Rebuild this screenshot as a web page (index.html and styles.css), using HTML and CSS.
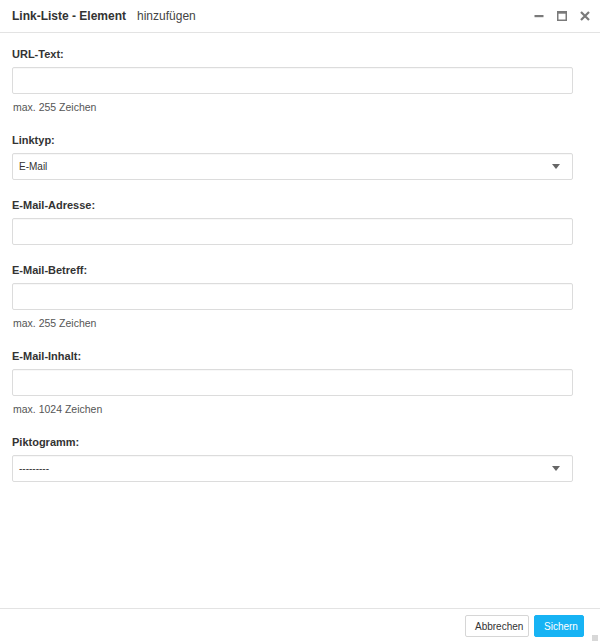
FILE: index.html
```html
<!DOCTYPE html>
<html lang="de">
<head>
<meta charset="utf-8">
<title>Link-Liste - Element hinzufügen</title>
<link rel="stylesheet" href="styles.css">
</head>
<body>
<div class="dialog">
  <header class="dlg-head">
    <h1 class="dlg-title"><span class="t-strong">Link-Liste - Element</span><span class="t-light">hinzufügen</span></h1>
    <div class="win-ctrls">
      <svg class="ico" width="10" height="10" viewBox="0 0 10 10"><rect x="0.5" y="4" width="9" height="2.2" fill="#7a7a7a"/></svg>
      <svg class="ico" width="10" height="10" viewBox="0 0 10 10"><rect x="0.75" y="0.75" width="8.5" height="8.5" fill="none" stroke="#7a7a7a" stroke-width="1.5"/><rect x="0.5" y="0.5" width="9" height="2.2" fill="#7a7a7a"/></svg>
      <svg class="ico" width="10" height="10" viewBox="0 0 10 10"><path d="M1 1 L9 9 M9 1 L1 9" stroke="#7a7a7a" stroke-width="2.2" stroke-linecap="butt"/></svg>
    </div>
  </header>
  <main class="dlg-body">
    <div class="group">
      <label class="lbl">URL-Text:</label>
      <div class="field"></div>
      <div class="hint">max. 255 Zeichen</div>
    </div>
    <div class="group">
      <label class="lbl">Linktyp:</label>
      <div class="field select"><span class="val">E-Mail</span><span class="caret"></span></div>
    </div>
    <div class="group">
      <label class="lbl">E-Mail-Adresse:</label>
      <div class="field"></div>
    </div>
    <div class="group">
      <label class="lbl">E-Mail-Betreff:</label>
      <div class="field"></div>
      <div class="hint">max. 255 Zeichen</div>
    </div>
    <div class="group">
      <label class="lbl">E-Mail-Inhalt:</label>
      <div class="field"></div>
      <div class="hint">max. 1024 Zeichen</div>
    </div>
    <div class="group">
      <label class="lbl">Piktogramm:</label>
      <div class="field select"><span class="val">---------</span><span class="caret"></span></div>
    </div>
  </main>
  <footer class="dlg-foot">
    <button class="btn btn-default">Abbrechen</button>
    <button class="btn btn-primary">Sichern</button>
    <span class="grip"></span>
  </footer>
</div>
</body>
</html>
```
FILE: styles.css
```css
html, body {
  margin: 0;
  padding: 0;
  background: #fff;
}
body {
  font-family: "Liberation Sans", Arial, sans-serif;
  color: #333;
}
.dialog {
  width: 600px;
  height: 643px;
  display: flex;
  flex-direction: column;
  position: relative;
}
.dlg-head {
  height: 32px;
  border-bottom: 1px solid #e3e3e3;
  display: flex;
  align-items: center;
  padding: 0 12px;
  flex: none;
}
.dlg-title {
  margin: 0;
  font-size: 12px;
  font-weight: normal;
  flex: 1;
  line-height: 14px;
  color: #333;
}
.t-strong {
  font-weight: bold;
  margin-right: 11px;
}
.t-light {
  color: #444;
}
.win-ctrls {
  display: flex;
  gap: 13px;
  margin-right: -2px;
}
.ico {
  display: block;
}
.dlg-body {
  flex: 1;
  padding: 14px 27px 0 12px;
}
.group {
  margin-bottom: 18px;
}
.lbl {
  display: block;
  font-size: 11px;
  font-weight: bold;
  line-height: 14px;
  margin-bottom: 6px;
  color: #333;
}
.field {
  height: 27px;
  box-sizing: border-box;
  border: 1px solid #dcdcdc;
  border-radius: 2px;
  box-shadow: inset 0 1px 1px rgba(0,0,0,0.03);
  background: #fff;
}
.select {
  display: flex;
  align-items: center;
  padding: 0 12px 0 6px;
}
.val {
  flex: 1;
  font-size: 10px;
  color: #333;
}
.caret {
  width: 0;
  height: 0;
  border-left: 4.5px solid transparent;
  border-right: 4.5px solid transparent;
  border-top: 5px solid #666;
}
.hint {
  font-size: 10.5px;
  line-height: 15px;
  margin-top: 6px;
  padding-left: 1px;
  color: #555;
}
.dlg-foot {
  flex: none;
  height: 35px;
  box-sizing: border-box;
  border-top: 1px solid #e3e3e3;
  display: flex;
  justify-content: flex-end;
  align-items: flex-start;
  padding: 6px 16px 0 0;
  gap: 5px;
}
.btn {
  height: 22px;
  font-family: "Liberation Sans", Arial, sans-serif;
  font-size: 10px;
  border-radius: 2px;
  padding: 0 9px;
  cursor: pointer;
}
.btn-default {
  background: #fff;
  border: 1px solid #d6d6d6;
  color: #333;
  width: 64px;
}
.btn-primary {
  background: #17b3f4;
  border: 1px solid #17b3f4;
  color: #fff;
  width: 50px;
}
.grip {
  position: absolute;
  right: 2px;
  bottom: 2px;
  width: 6px;
  height: 6px;
  background-image: radial-gradient(circle, #aaa 0.6px, transparent 0.8px);
  background-size: 2px 2px;
}
```
